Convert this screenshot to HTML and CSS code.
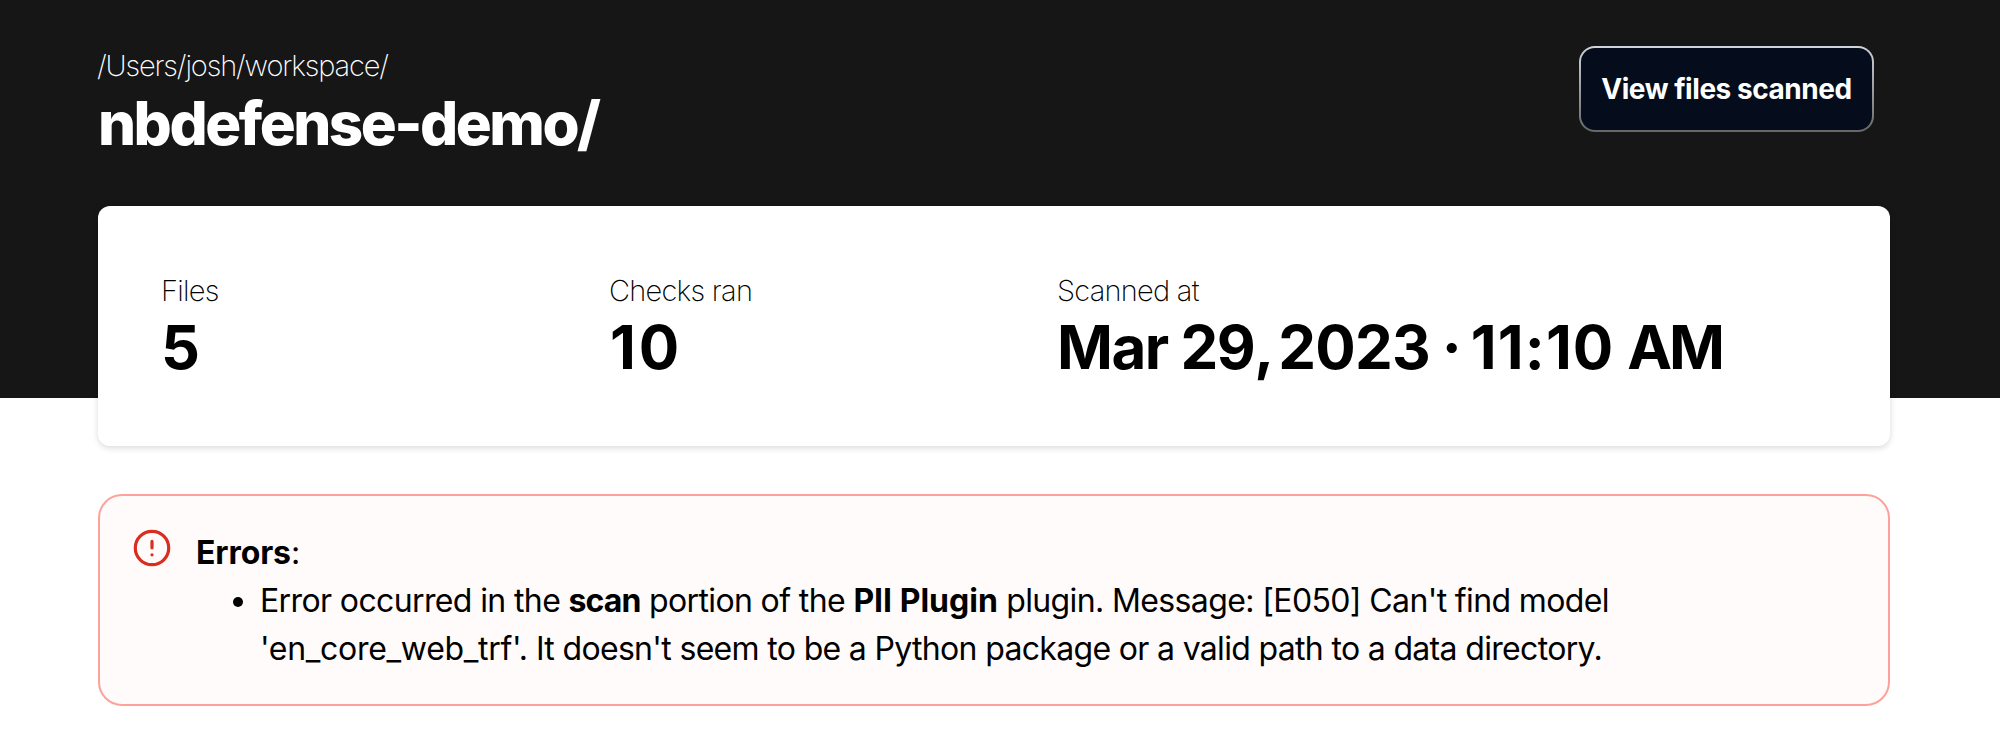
FILE: index.html
```html
<!DOCTYPE html>
<html lang="en">
<head>
<meta charset="utf-8">
<title>nbdefense-demo</title>
<link rel="stylesheet" href="styles.css">
</head>
<body>
<header class="hero">
  <div>
    <p class="path">/Users/josh/workspace/</p>
    <h1 class="project">nbdefense-demo/</h1>
  </div>
  <button class="view-button"><span>View files scanned</span></button>
</header>
<main class="content">
  <section class="summary">
    <div class="stat"><p class="label">Files</p><p class="value value-files">5</p></div>
    <div class="stat"><p class="label">Checks ran</p><p class="value value-checks">10</p></div>
    <div class="stat"><p class="label">Scanned at</p><p class="value">Mar 29<span class="comma">, </span><span class="year">2023</span><span class="dot"> · </span><span class="time">11:10</span> <span class="meridiem">AM</span></p></div>
  </section>
  <section class="errors">
    <svg class="alert-icon" viewBox="0 0 38 38" fill="none" stroke="#d92d20" stroke-width="3.2" stroke-linecap="round"><circle cx="19" cy="19" r="16.7"/><path d="M19 12.4v6.4M19 25.8h.02"/></svg>
    <div class="error-body">
      <p class="error-title"><b>Errors</b>:</p>
      <ul class="error-list">
        <li><span class="line">Error occurred in the <b class="phase">scan</b> portion of the <b class="plugin">PII Plugin</b> plugin. Message: [E050] Can't find model</span><br><span class="line line-two"><span class="model">'en_core_web_trf'.</span> It doesn't seem to be a Python package or a valid path to a data directory.</span></li>
      </ul>
    </div>
  </section>
</main>
</body>
</html>
```
FILE: styles.css
```css
* { box-sizing: border-box; }
body { margin: 0; background: #fff; color: #000; font-family: Inter, "Liberation Sans", sans-serif; }
p, h1, ul { margin: 0; }
.hero { height: 398px; background: #161616; color: #fff; display: flex; justify-content: space-between; align-items: flex-start; padding: 46px 126px 0 98px; }
.path { font-size: 29px; line-height: 40px; font-weight: 200; letter-spacing: -1.15px; margin-left: -1px; }
.project { font-size: 60px; line-height: 75px; font-weight: 800; letter-spacing: -2.5px; }
.view-button { width: 295px; height: 86px; border: 2px solid transparent; border-radius: 16px; background: linear-gradient(#050d1c, #050d1c) padding-box, linear-gradient(#d0d5dd, #666) border-box; color: #fff; font: 650 28px/40px Inter, sans-serif; letter-spacing: -.45px; white-space: nowrap; padding: 0; }
.content { margin: -192px 110px 0 98px; }
.summary { height: 240px; background: #fff; border-radius: 12px; box-shadow: 0 2px 6px rgba(0,0,0,.15); display: grid; grid-template-columns: 448px 448px 1fr; padding: 65px 0 0 63px; }
.label { font-size: 29px; line-height: 40px; font-weight: 160; letter-spacing: -.75px; }
.value { font-size: 60px; line-height: 73px; font-weight: 700; letter-spacing: -1.5px; white-space: nowrap; }
.value-files { font-size: 61px; }
.value-checks { letter-spacing: 3px; margin-left: 1px; }
.comma { letter-spacing: -4.2px; }
.year { letter-spacing: -.7px; }
.dot { letter-spacing: -2.6px; }
.time { letter-spacing: 1.1px; }
.meridiem { letter-spacing: -3px; }
.errors { margin-top: 48px; height: 212px; border: 2px solid #fda29b; border-radius: 24px; background: #fffbfa; display: flex; padding: 33px 0 0 33px; }
.alert-icon { width: 38px; height: 38px; flex: none; margin-right: 25px; }
.error-body { font-size: 32px; line-height: 48px; }
.error-title { letter-spacing: -.1px; }
.error-list { padding-left: 64px; }
.line { white-space: nowrap; letter-spacing: -.62px; }
.line-two { letter-spacing: -.67px; }
.phase { letter-spacing: -.9px; }
.plugin { letter-spacing: 0; }
.model { letter-spacing: -.3px; }
```
